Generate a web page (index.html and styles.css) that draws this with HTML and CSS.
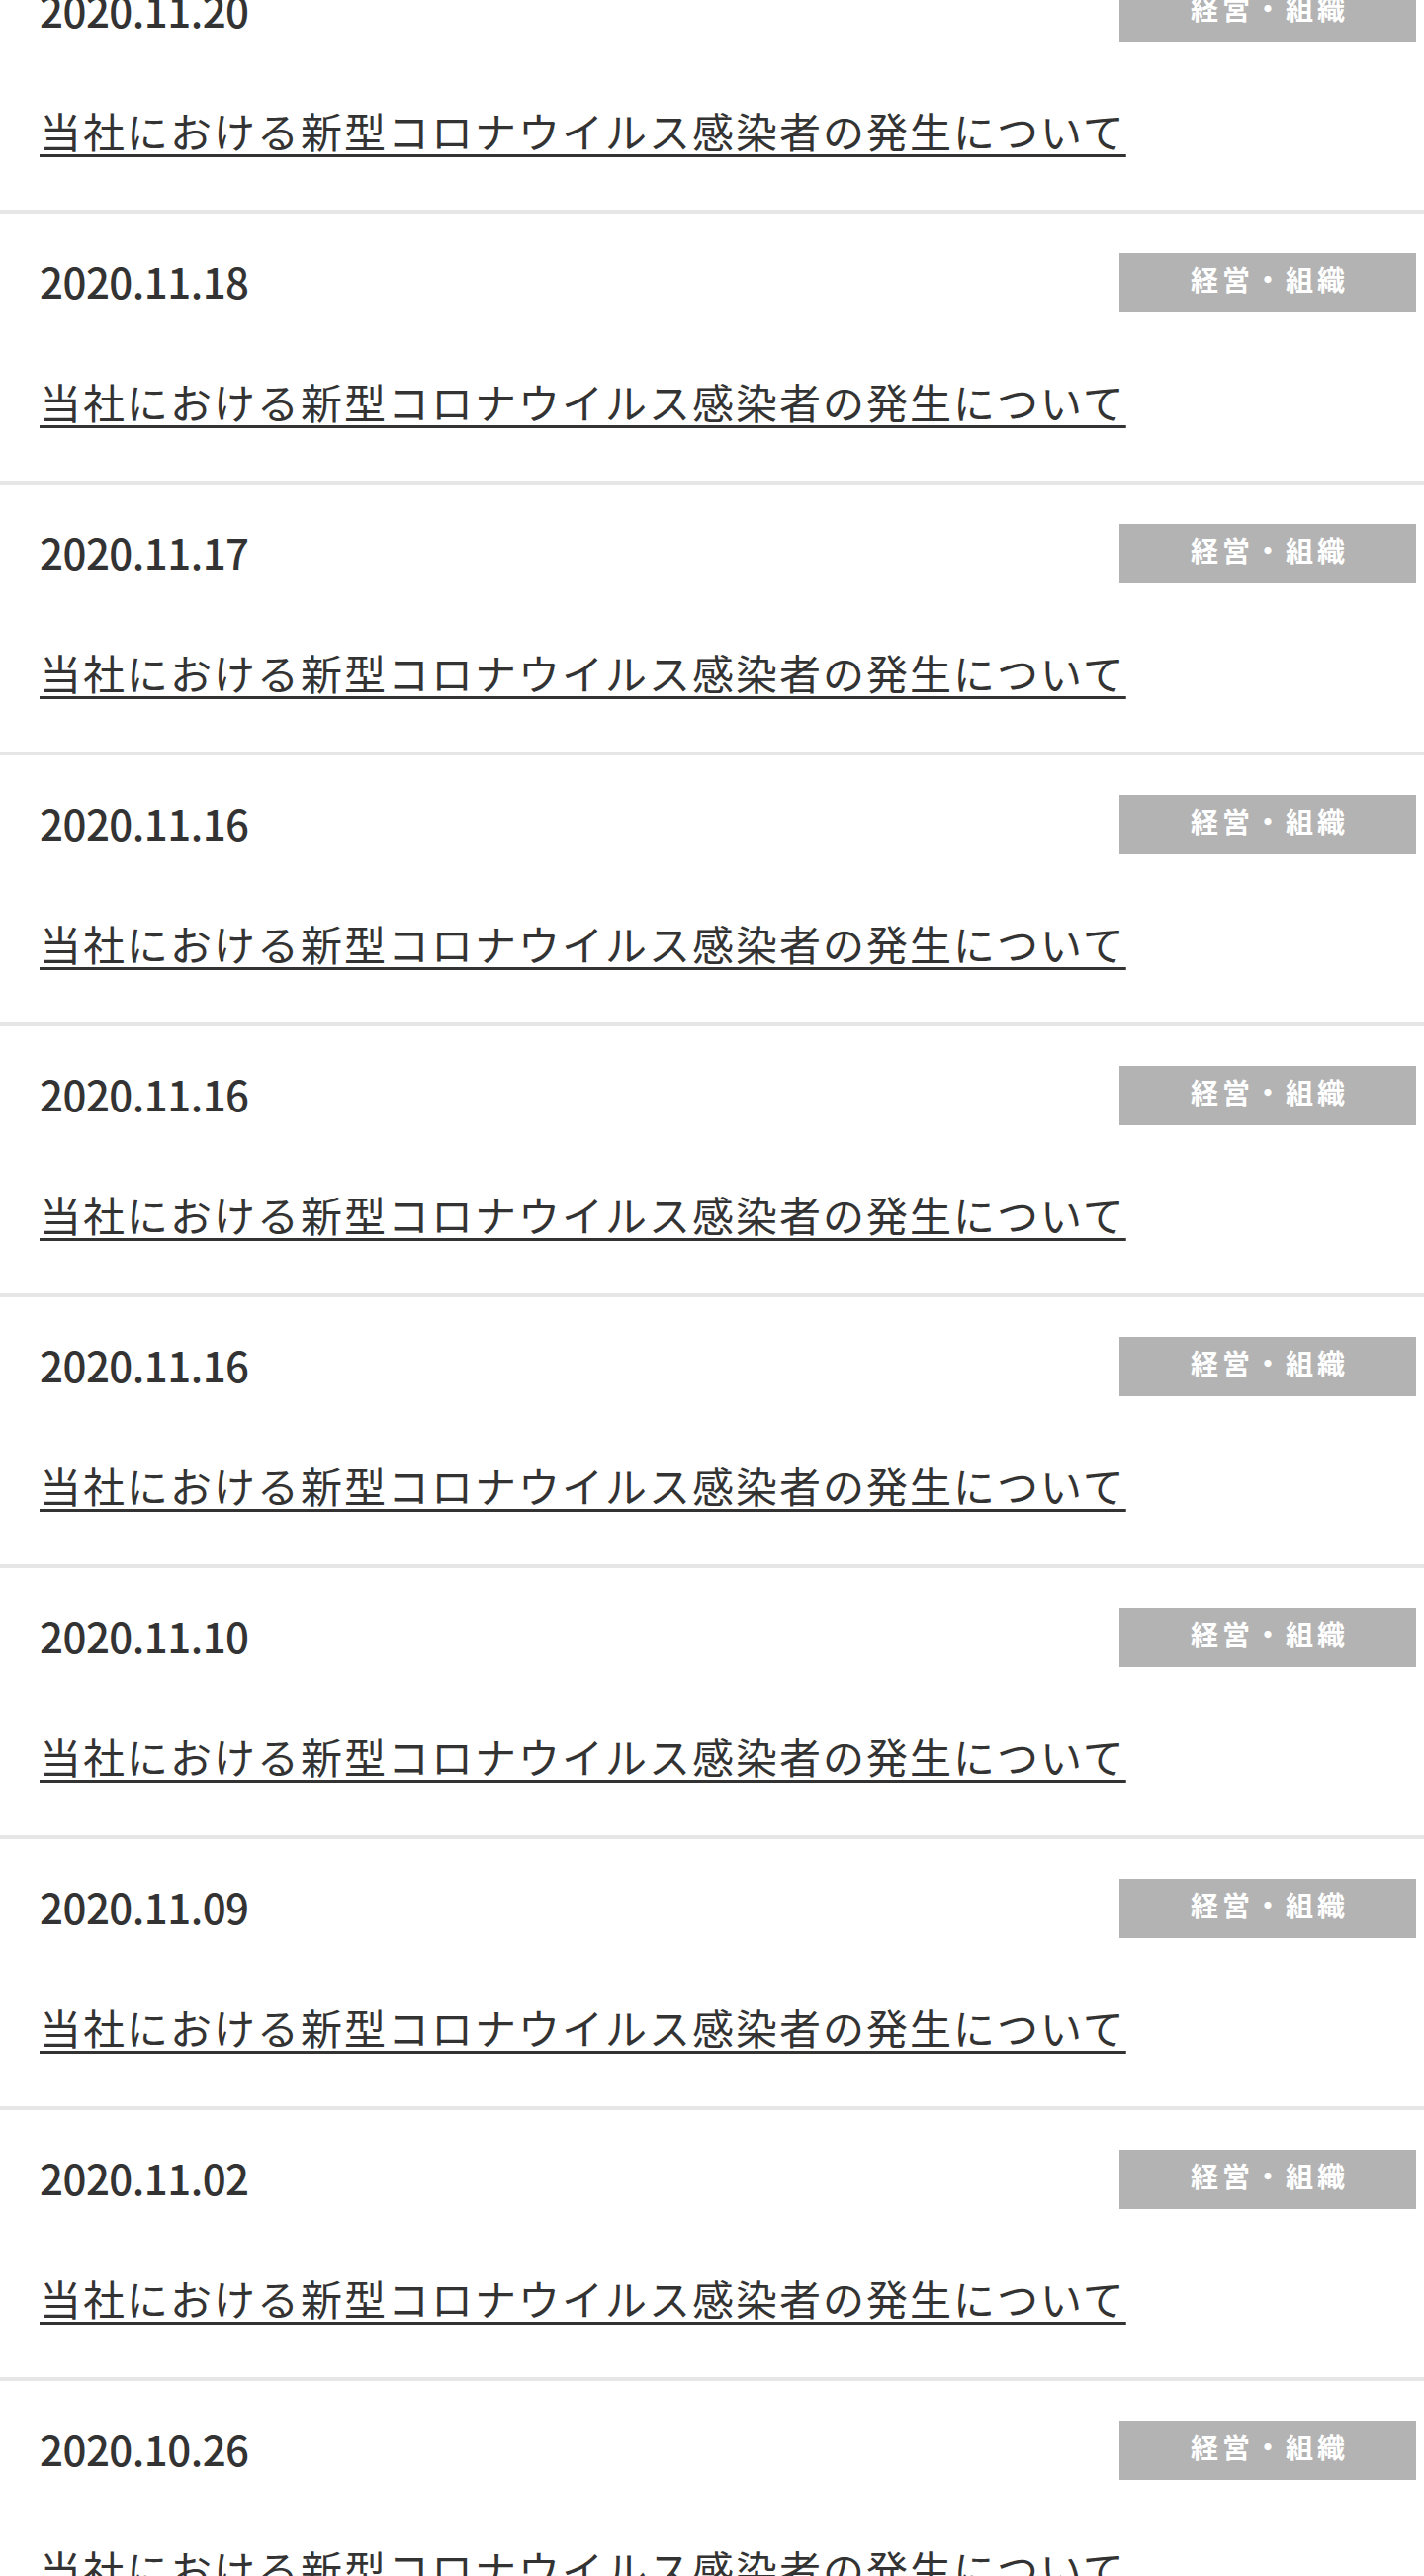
FILE: index.html
```html
<!DOCTYPE html>
<html lang="ja">
<head>
  <meta charset="utf-8">
  <title>ニュース一覧</title>
  <link rel="stylesheet" href="styles.css">
</head>
<body>

  <div class="page">
    <ul class="news">
      <li class="news-item">
        <div class="news-head">
          <span class="news-date">2020.11.20</span>
          <span class="news-cat">経営・組織</span>
        </div>
        <a class="news-title" href="#">当社における新型コロナウイルス感染者の発生について</a>
      </li>
      <li class="news-item">
        <div class="news-head">
          <span class="news-date">2020.11.18</span>
          <span class="news-cat">経営・組織</span>
        </div>
        <a class="news-title" href="#">当社における新型コロナウイルス感染者の発生について</a>
      </li>
      <li class="news-item">
        <div class="news-head">
          <span class="news-date">2020.11.17</span>
          <span class="news-cat">経営・組織</span>
        </div>
        <a class="news-title" href="#">当社における新型コロナウイルス感染者の発生について</a>
      </li>
      <li class="news-item">
        <div class="news-head">
          <span class="news-date">2020.11.16</span>
          <span class="news-cat">経営・組織</span>
        </div>
        <a class="news-title" href="#">当社における新型コロナウイルス感染者の発生について</a>
      </li>
      <li class="news-item">
        <div class="news-head">
          <span class="news-date">2020.11.16</span>
          <span class="news-cat">経営・組織</span>
        </div>
        <a class="news-title" href="#">当社における新型コロナウイルス感染者の発生について</a>
      </li>
      <li class="news-item">
        <div class="news-head">
          <span class="news-date">2020.11.16</span>
          <span class="news-cat">経営・組織</span>
        </div>
        <a class="news-title" href="#">当社における新型コロナウイルス感染者の発生について</a>
      </li>
      <li class="news-item">
        <div class="news-head">
          <span class="news-date">2020.11.10</span>
          <span class="news-cat">経営・組織</span>
        </div>
        <a class="news-title" href="#">当社における新型コロナウイルス感染者の発生について</a>
      </li>
      <li class="news-item">
        <div class="news-head">
          <span class="news-date">2020.11.09</span>
          <span class="news-cat">経営・組織</span>
        </div>
        <a class="news-title" href="#">当社における新型コロナウイルス感染者の発生について</a>
      </li>
      <li class="news-item">
        <div class="news-head">
          <span class="news-date">2020.11.02</span>
          <span class="news-cat">経営・組織</span>
        </div>
        <a class="news-title" href="#">当社における新型コロナウイルス感染者の発生について</a>
      </li>
      <li class="news-item">
        <div class="news-head">
          <span class="news-date">2020.10.26</span>
          <span class="news-cat">経営・組織</span>
        </div>
        <a class="news-title" href="#">当社における新型コロナウイルス感染者の発生について</a>
      </li>
    </ul>
  </div>

</body>
</html>
```

FILE: styles.css
```css
html, body {
  margin: 0;
  padding: 0;
  background-color: #fff;
}

body {
  font-family: "Noto Sans CJK JP", "Noto Sans", sans-serif;
  color: #333;
}

.page {
  height: 2605px;
  overflow: hidden;
}

/* list starts scrolled: first item is cut off at the top */
.news {
  list-style: none;
  margin: -58px 0 0;
  padding: 0;
}

.news-item {
  padding: 40px 8px 49px 40px;
  border-bottom: 4px solid #e6e6e6;
}

.news-head {
  display: flex;
  justify-content: space-between;
  align-items: flex-start;
  height: 60px;
}

.news-date {
  font-size: 42px;
  font-weight: 500;
  letter-spacing: -0.5px;
  line-height: 56px;
}

.news-cat {
  width: 300px;
  height: 60px;
  box-sizing: border-box;
  padding-left: 4px;
  background-color: #b3b3b3;
  color: #fff;
  font-size: 28px;
  font-weight: bold;
  letter-spacing: 4px;
  line-height: 52px;
  text-align: center;
}

.news-title {
  display: block;
  margin-top: 58px;
  font-size: 42px;
  line-height: 63px;
  letter-spacing: 2px;
  color: #333;
  text-decoration: underline;
  text-decoration-thickness: 3px;
  text-underline-offset: 6px;
}
```
